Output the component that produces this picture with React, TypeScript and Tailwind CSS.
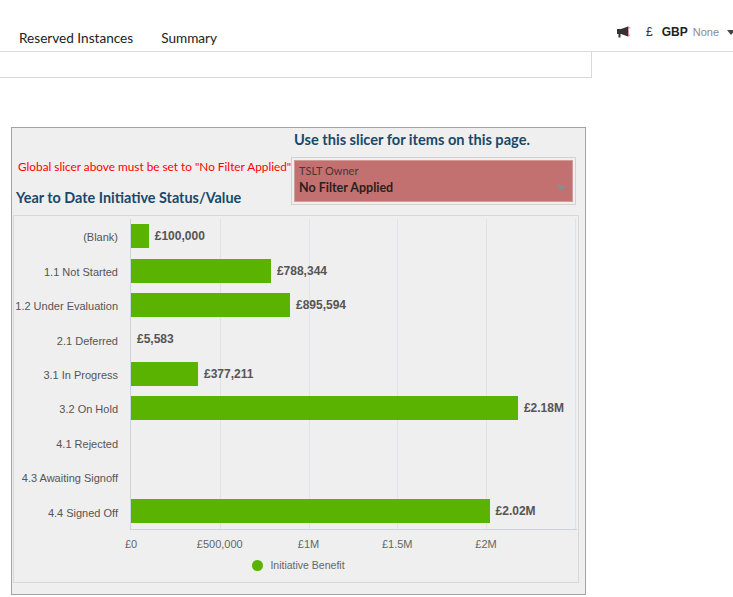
import React from 'react';

const rows = [
  { label: '(Blank)', value: 100000, text: '£100,000' },
  { label: '1.1 Not Started', value: 788344, text: '£788,344' },
  { label: '1.2 Under Evaluation', value: 895594, text: '£895,594' },
  { label: '2.1 Deferred', value: 5583, text: '£5,583' },
  { label: '3.1 In Progress', value: 377211, text: '£377,211' },
  { label: '3.2 On Hold', value: 2180000, text: '£2.18M' },
  { label: '4.1 Rejected', value: 0, text: '' },
  { label: '4.3 Awaiting Signoff', value: 0, text: '' },
  { label: '4.4 Signed Off', value: 2020000, text: '£2.02M' },
];

const ticks = ['£0', '£500,000', '£1M', '£1.5M', '£2M'];
const PX_PER_500K = 88.75;

const Megaphone = () => (
  <svg width="15" height="12" viewBox="0 0 15 12" className="block">
    <rect x="1" y="3" width="4" height="5" fill="#333" />
    <path d="M5 3 L12 0.5 L12 10.5 L5 8 Z" fill="#333" />
    <rect x="2.5" y="8" width="2" height="3.5" fill="#333" />
    <path d="M12.5 0.8 L14 2.5 M12.5 10.2 L14 8.5" stroke="#6a5aa8" strokeWidth="0.8" />
    <path d="M12.5 0.5 L12.5 10.5" stroke="#c05050" strokeWidth="0.6" />
  </svg>
);

export default function App() {
  return (
    <div className="w-[733px] h-[597px] bg-white overflow-hidden font-['Segoe_UI',Lato,sans-serif] text-[#222]">
      {/* top nav */}
      <div className="h-[52px] border-b border-[#d9d9d9] flex justify-between">
        <div className="flex items-end pb-[3px] pl-[19px] gap-[28px] text-[13.6px] leading-[20px] text-[#222]">
          <span>Reserved Instances</span>
          <span>Summary</span>
        </div>
        <div className="flex items-center mt-[24px] self-start h-[16px]">
          <Megaphone />
          <span className="ml-[15px] text-[12px] text-[#333] font-['Liberation_Sans',sans-serif]">£</span>
          <span className="ml-[9px] text-[12px] font-bold text-[#222] font-['Liberation_Sans',sans-serif]">GBP</span>
          <span className="ml-[5px] text-[11px] text-[#8a8a8a] font-['Liberation_Sans',sans-serif]">None</span>
          <span className="ml-[8px] w-0 h-0 border-l-[4px] border-r-[4px] border-t-[5px] border-l-transparent border-r-transparent border-t-[#444] mr-[-2px]" />
        </div>
      </div>
      <div className="w-[592px] h-[26px] border-r border-b border-[#d9d9d9]" />

      {/* report visual */}
      <div className="mt-[49px] ml-[11px] w-[575px] h-[468px] border border-[#a3a3a3] bg-[#efefef] flex flex-col">
        <div className="h-[87px] flex">
          <div className="w-[279px] flex flex-col">
            <div className="pt-[32px] pl-[6px] text-[11.8px] leading-[14px] text-[#ff0000] whitespace-nowrap">
              Global slicer above must be set to "No Filter Applied"
            </div>
            <div className="mt-[15px] pl-[4px] text-[14.4px] leading-[18px] font-bold text-[#17496b] whitespace-nowrap">
              Year to Date Initiative Status/Value
            </div>
          </div>
          <div className="flex flex-col">
            <div className="pt-[3px] pl-[3px] h-[21px] text-[14.6px] leading-[18px] font-bold text-[#17496b] whitespace-nowrap">
              Use this slicer for items on this page.
            </div>
            <div className="mt-[8px] w-[285px] h-[48px] border border-[#d2d2d2] p-[2px]">
              <div className="h-full bg-[#c27070] border border-[#d39a9a] flex flex-col pl-[4px] pr-[6px] relative">
                <div className="text-[11px] leading-[14px] mt-[3px] text-[#4b3434]">TSLT Owner</div>
                <div className="text-[12.5px] leading-[16px] mt-[2px] font-bold text-[#2a2020]">No Filter Applied</div>
                <span className="absolute right-[6px] top-[24px] w-0 h-0 border-l-[5px] border-r-[5px] border-t-[6px] border-l-transparent border-r-transparent border-t-[#8c8c8c]" />
              </div>
            </div>
          </div>
        </div>

        {/* chart */}
        <div className="ml-[1px] w-[566px] h-[368px] border border-[#d8d8d8] flex flex-col font-['Liberation_Sans',Arial,sans-serif]">
          <div className="mt-[3px] flex">
            <div className="w-[104px] flex flex-col">
              {rows.map((r) => (
                <div key={r.label} className="h-[34.4px] flex items-center justify-end pt-[3px] text-[11px] text-[#555] whitespace-nowrap">
                  {r.label}
                </div>
              ))}
            </div>
            <div className="ml-[12px] w-[447px] relative border-l border-b border-[#c9d4df]">
              {[1, 2, 3, 4, 5].map((i) => (
                <div
                  key={i}
                  className="absolute top-0 bottom-0 w-px bg-[#dde3ea]"
                  style={{ left: i * PX_PER_500K }}
                />
              ))}
              <div className="relative flex flex-col">
                {rows.map((r) => (
                  <div key={r.label} className="h-[34.4px] flex items-center">
                    {r.value >= 10000 && (
                      <div
                        className="h-[24px] bg-[#5ab300]"
                        style={{ width: (r.value / 500000) * PX_PER_500K }}
                      />
                    )}
                    {r.text && (
                      <span className="ml-[6px] text-[12px] font-bold text-[#555] whitespace-nowrap">{r.text}</span>
                    )}
                  </div>
                ))}
              </div>
            </div>
          </div>
          <div className="ml-[117px] relative h-[22px] text-[11px] text-[#666]">
            {ticks.map((t, i) => (
              <span
                key={t}
                className="absolute top-[6px] -translate-x-1/2 whitespace-nowrap"
                style={{ left: i * PX_PER_500K }}
              >
                {t}
              </span>
            ))}
          </div>
          <div className="mt-[6px] flex items-center justify-center gap-[7px] pl-[5px]">
            <span className="w-[11px] h-[11px] rounded-full bg-[#5ab300]" />
            <span className="text-[10.5px] text-[#666]">Initiative Benefit</span>
          </div>
        </div>
      </div>
    </div>
  );
}
